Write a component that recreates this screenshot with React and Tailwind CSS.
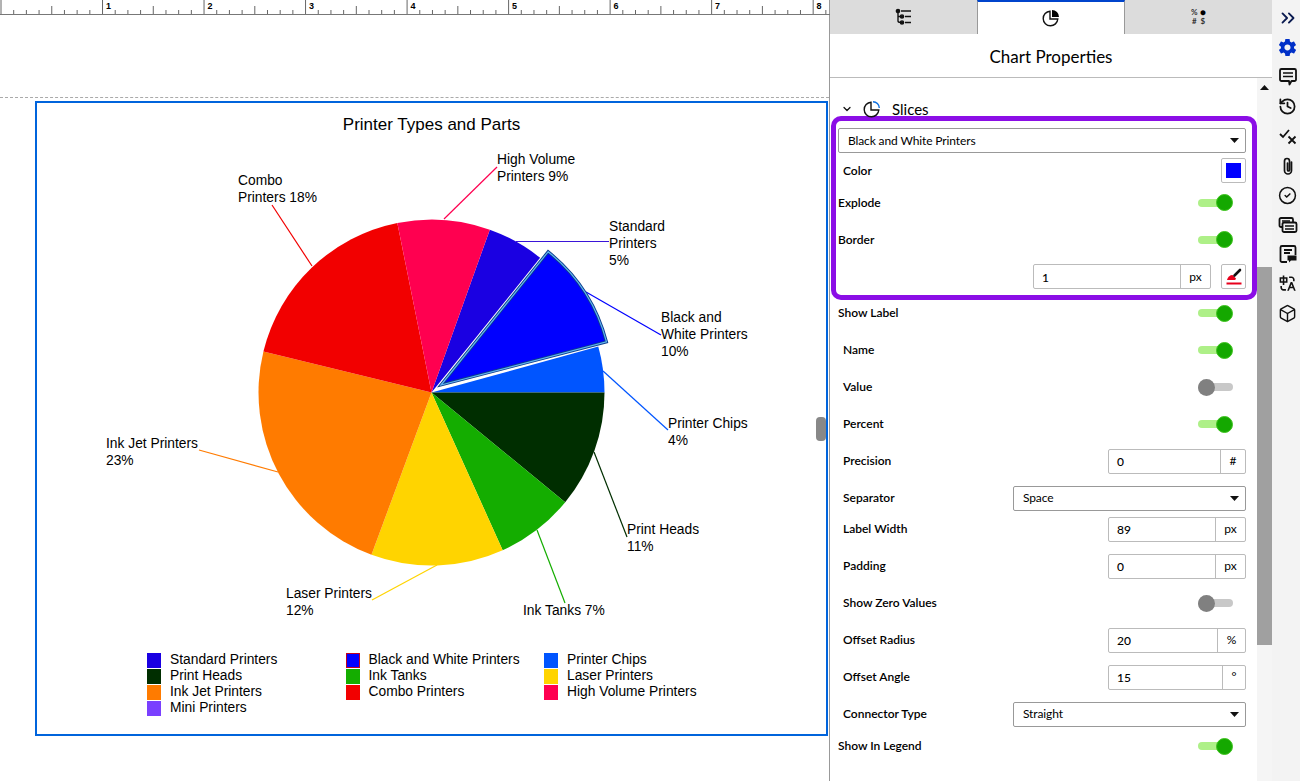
import { ChevronDown, ChevronsRight, History, CircleCheck, Box } from 'lucide-react'
import { IoMdSettings } from 'react-icons/io'
import { RiTranslate } from 'react-icons/ri'

const CX = 431.5
const CY = 392.5
const R = 173

const polar = (cx, cy, r, deg) => {
  const a = (deg * Math.PI) / 180
  return [cx + r * Math.sin(a), cy - r * Math.cos(a)]
}

const wedge = (cx, cy, r, from, to) => {
  const [x1, y1] = polar(cx, cy, r, from)
  const [x2, y2] = polar(cx, cy, r, to)
  const large = to - from > 180 ? 1 : 0
  return `M${cx} ${cy}L${x1} ${y1}A${r} ${r} 0 ${large} 1 ${x2} ${y2}Z`
}

const slices = [
  { from: 19.7, to: 38.9, color: '#1a00e2' },
  { from: 74.6, to: 90, color: '#0055ff' },
  { from: 90, to: 129.4, color: '#002e00' },
  { from: 129.4, to: 155.7, color: '#14ad00' },
  { from: 155.7, to: 200.3, color: '#ffd400' },
  { from: 200.3, to: 283.7, color: '#ff7b00' },
  { from: 283.7, to: 348.6, color: '#f20000' },
  { from: 348.6, to: 379.7, color: '#ff0050' },
]

const connectors = [
  { p: '444,219 497,167', color: '#ff0050' },
  { p: '516,241.5 609,241.5', color: '#3a14d8' },
  { p: '586,292 661,335', color: '#0000ff' },
  { p: '603,371 668,430', color: '#0055ff' },
  { p: '594,452 627,537', color: '#002e00' },
  { p: '537,530 565,603', color: '#14ad00' },
  { p: '437,565 372,600', color: '#ffd400' },
  { p: '278,472 199,450', color: '#ff7b00' },
  { p: '312,266 272,205', color: '#f20000' },
]

const labels = [
  { x: 238, y: 185, lines: ['Combo', 'Printers 18%'] },
  { x: 497, y: 164, lines: ['High Volume', 'Printers 9%'] },
  { x: 609, y: 231, lines: ['Standard', 'Printers', '5%'] },
  { x: 661, y: 322, lines: ['Black and', 'White Printers', '10%'] },
  { x: 668, y: 428, lines: ['Printer Chips', '4%'] },
  { x: 627, y: 534, lines: ['Print Heads', '11%'] },
  { x: 523, y: 615, lines: ['Ink Tanks 7%'] },
  { x: 286, y: 598, lines: ['Laser Printers', '12%'] },
  { x: 106, y: 448, lines: ['Ink Jet Printers', '23%'] },
]

const legend = [
  { name: 'Standard Printers', color: 'bg-[#1a00e2]' },
  { name: 'Black and White Printers', color: 'bg-[#0000ff] border border-[#c00020]' },
  { name: 'Printer Chips', color: 'bg-[#0055ff]' },
  { name: 'Print Heads', color: 'bg-[#002e00]' },
  { name: 'Ink Tanks', color: 'bg-[#14ad00]' },
  { name: 'Laser Printers', color: 'bg-[#ffd400]' },
  { name: 'Ink Jet Printers', color: 'bg-[#ff7b00]' },
  { name: 'Combo Printers', color: 'bg-[#f20000]' },
  { name: 'High Volume Printers', color: 'bg-[#ff0050]' },
  { name: 'Mini Printers', color: 'bg-[#7a40ff]' },
]

const Ruler = () => {
  const ticks = []
  for (let i = 0; i <= 65; i++) {
    const x = 1 + i * 12.69
    const top = i % 8 === 0 ? 0 : i % 4 === 0 ? 6 : 10
    ticks.push(<line key={i} x1={x} x2={x} y1={top} y2={14} stroke="#666" strokeWidth="1" />)
  }
  return (
    <svg width="830" height="15" className="block shrink-0">
      {ticks}
      <line x1="0" x2="830" y1="14.5" y2="14.5" stroke="#777" strokeWidth="1" />
      {[1, 2, 3, 4, 5, 6, 7, 8].map((n) => (
        <text key={n} x={4.5 + n * 101.5} y="9" className="text-[9px] font-bold font-['Liberation_Sans',sans-serif]">{n}</text>
      ))}
    </svg>
  )
}

const PieChart = () => (
  <svg width="789" height="546" viewBox="37 103 789 546" className="block">
    <text x="431.5" y="130" textAnchor="middle" className="text-[17px] font-['Liberation_Sans',sans-serif]">Printer Types and Parts</text>
    {connectors.map((c) => (
      <polyline key={c.p} points={c.p} fill="none" stroke={c.color} strokeWidth="1.2" />
    ))}
    {slices.map((s) => (
      <path key={s.from} d={wedge(CX, CY, R, s.from, s.to)} fill={s.color} />
    ))}
    <path d={wedge(441, 385, 171, 38.8, 75.4)} fill="#0000ff" stroke="#0b3c8c" strokeWidth="3" strokeLinejoin="miter" />
    <path d={wedge(441, 385, 171, 38.8, 75.4)} fill="none" stroke="#62b4f0" strokeWidth="1.2" />
    {labels.map((l) => (
      <text key={l.x} x={l.x} y={l.y} className="text-[13.8px] font-['Liberation_Sans',sans-serif]">
        {l.lines.map((t, i) => (
          <tspan key={t} x={l.x} dy={i === 0 ? 0 : 17}>{t}</tspan>
        ))}
      </text>
    ))}
  </svg>
)

const Toggle = ({ on = true }) => (
  <div className="relative w-[35px] h-[17px] mr-[13px] shrink-0">
    <div className={`absolute top-[4.5px] left-0 h-[8px] rounded-full ${on ? 'w-[30px] bg-[#aef088]' : 'w-[35px] bg-[#c8c8c8]'}`} />
    <div className={`absolute top-0 w-[17px] h-[17px] rounded-full ${on ? 'right-0 bg-[#14a800] border border-[#3fc41f]' : 'left-0 bg-[#808080]'}`} />
  </div>
)

const Caret = () => (
  <svg width="9" height="5" viewBox="0 0 9 5" className="shrink-0"><polygon points="0,0 9,0 4.5,5" fill="#111" /></svg>
)

const SelectBox = ({ value, width }) => (
  <div className={`h-[25px] flex items-center justify-between pl-[9px] pr-[6px] border border-[#999] rounded-[2px] bg-white text-[12px] tracking-[-0.12px] ${width}`}>
    <span>{value}</span>
    <Caret />
  </div>
)

const NumberBox = ({ value, unit, width, unitWidth }) => (
  <div className={`h-[25px] flex border border-[#bbb] rounded-[2px] bg-white text-[12px] ${width}`}>
    <span className="flex-1 flex items-center pl-[8px] pt-[2px] font-medium">{value}</span>
    <span className={`flex items-center justify-center border-l border-[#bbb] ${unitWidth}`}>{unit}</span>
  </div>
)

const Row = ({ label, indent = true, className = '', children }) => (
  <div className={`h-[25px] flex items-center justify-between ${className}`}>
    <span className={`text-[12px] font-semibold ${indent ? 'ml-[5px]' : ''}`}>{label}</span>
    {children}
  </div>
)

const TabOneIcon = () => (
  <svg width="18" height="18" viewBox="0 0 18 18" fill="none" stroke="#111" strokeWidth="1.4">
    <path d="M3 2v11" />
    <circle cx="3" cy="3" r="1.6" fill="#111" />
    <circle cx="7" cy="8.5" r="1.6" fill="#111" />
    <circle cx="7" cy="14.5" r="1.6" fill="#111" />
    <path d="M3 8.5h3M3 13c0 1 1 1.5 3 1.5M6 3h10M10 8.5h6M10 14.5h6" />
  </svg>
)

const PieTabIcon = ({ accent = '#000', fillIt = true }) => (
  <svg width="18" height="18" viewBox="0 0 18 18" fill="none" stroke="#111" strokeWidth="1.4">
    <path d="M8 2.2a7.3 7.3 0 1 0 7.8 7.8H8z" />
    {fillIt
      ? <path d="M10 1a7 7 0 0 1 7 7h-7z" fill={accent} stroke="none" />
      : <path d="M10 1.7a6.5 6.5 0 0 1 6.3 6.3" stroke={accent} />}
  </svg>
)

const SymbolIcon = () => (
  <div className="grid grid-cols-2 gap-x-[2px] text-[8px] leading-[9px] font-bold text-[#333] text-center">
    <span>%</span><span className="text-[10px] leading-[9px] text-black">●</span>
    <span>#</span><span>$</span>
  </div>
)

const BrushIcon = () => (
  <svg width="18" height="18" viewBox="0 0 18 18">
    <path d="M2 12c.5-3 3-5 5.500-5l3.500 3.500c-.3 1-.9 1.500-2 1.500z" fill="#e8001c" />
    <path d="M9.500 7.500L15 2" stroke="#111" strokeWidth="2.6" strokeLinecap="round" />
    <rect x="1.500" y="14.500" width="15" height="2" fill="#e8001c" />
  </svg>
)

const ChatIcon = () => (
  <svg width="20" height="20" viewBox="0 0 20 20" fill="none" stroke="#111" strokeWidth="1.8" strokeLinejoin="round">
    <path d="M3.500 2h13A1.500 1.500 0 0 1 18 3.500v9a1.500 1.500 0 0 1-1.500 1.500h-3l-2 3.500L11 14H3.500A1.500 1.500 0 0 1 2 12.500v-9A1.500 1.500 0 0 1 3.500 2z" />
    <path d="M5 6h10M5 9.500h10" strokeWidth="1.5" />
  </svg>
)

const CheckCross = () => (
  <svg width="20" height="20" viewBox="0 0 20 20" fill="none" stroke="#111" strokeWidth="1.8">
    <path d="M2 8l3 3 6-7M10.500 10.500l7 7M17.500 10.500l-7 7" />
  </svg>
)

const ClipIcon = () => (
  <svg width="20" height="20" viewBox="0 0 20 20" fill="none" stroke="#111" strokeWidth="1.7" strokeLinecap="round">
    <path d="M13.500 6v8.500a3.500 3.500 0 0 1-7 0V5a2.500 2.500 0 0 1 5 0v9a1 1 0 0 1-2 0V7" />
  </svg>
)

const StackIcon = () => (
  <svg width="20" height="20" viewBox="0 0 20 20" fill="none" stroke="#111" strokeWidth="1.8">
    <rect x="1.500" y="3" width="13.500" height="9" rx="1.500" />
    <rect x="4.500" y="7.500" width="14" height="9.500" rx="1.500" fill="#f3f3f3" />
    <path d="M7 11h9M7 14h9M4 6h8" strokeWidth="1.5" />
  </svg>
)

const NoteIcon = () => (
  <svg width="20" height="20" viewBox="0 0 20 20" fill="none" stroke="#111" strokeWidth="1.8">
    <path d="M9 18H4a1.500 1.500 0 0 1-1.500-1.500v-13A1.500 1.500 0 0 1 4 2h12a1.500 1.500 0 0 1 1.500 1.500V11" />
    <path d="M6 6h8M6 9h6" />
    <path d="M9.500 11.500h9v5h-5.500l-2 2v-2H9.500z" fill="#111" stroke="none" />
  </svg>
)

const railIcons = [
  <ChevronsRight key="a" size={22} color="#0a1a50" strokeWidth={2} />,
  <IoMdSettings key="b" size={21} color="#0030c8" />,
  <ChatIcon key="c" />,
  <History key="d" size={19} color="#111" strokeWidth={2.2} />,
  <CheckCross key="e" />,
  <ClipIcon key="f" />,
  <CircleCheck key="g" size={19} color="#111" strokeWidth={1.9} />,
  <StackIcon key="h" />,
  <NoteIcon key="i" />,
  <RiTranslate key="j" size={19} color="#111" />,
  <Box key="k" size={19} color="#111" strokeWidth={1.8} />,
]

export default function App() {
  return (
    <div className="flex w-[1300px] h-[781px] overflow-hidden bg-white text-black font-['Lato',sans-serif]">
      {/* canvas */}
      <div className="relative w-[830px] shrink-0 border-r border-[#999]">
        <Ruler />
        <div className="mt-[82px] border-t border-dashed border-[#aaa]" />
        <div className="ml-[35px] mt-[3px] w-[793px] h-[635px] border-2 border-[#0064dc] font-['Liberation_Sans',sans-serif]">
          <PieChart />
          <div className="grid grid-cols-[198.5px_198.5px_198.5px] pl-[110px] mt-[3px]">
            {legend.map((item) => (
              <div key={item.name} className="h-[16px] flex items-center gap-[9px] text-[13.8px]">
                <span className={`w-[14px] h-[15px] shrink-0 ${item.color}`} />
                <span className="whitespace-nowrap">{item.name}</span>
              </div>
            ))}
          </div>
        </div>
        <div className="absolute left-[816px] top-[417px] w-[10px] h-[24px] rounded-[4px] bg-[#888]" />
      </div>

      {/* properties panel */}
      <div className="w-[442px] shrink-0 flex flex-col">
        <div className="h-[34px] flex shrink-0">
          <div className="w-[147px] bg-[#dcdcdc] flex items-center justify-center"><TabOneIcon /></div>
          <div className="w-[148px] bg-white border-t-2 border-t-[#0044cc] border-x border-x-[#999] flex items-center justify-center"><PieTabIcon /></div>
          <div className="flex-1 bg-[#dcdcdc] flex items-center justify-center"><SymbolIcon /></div>
        </div>
        <div className="h-[44px] shrink-0 flex items-center justify-center pt-[2px] border-b border-[#bbb] text-[17px]">Chart Properties</div>
        <div className="flex-1 flex min-h-0">
          <div className="w-[427px] shrink-0">
            <div className="h-[38px] flex items-center pl-[11px] pt-[24px] text-[15px]">
              <ChevronDown size={12} color="#111" strokeWidth={2.5} />
              <span className="ml-[10px]"><PieTabIcon accent="#0b6fe0" fillIt={false} /></span>
              <span className="ml-[11px]">Slices</span>
            </div>
            <div className="ml-[1px] w-[426px] h-[184px] border-[5px] border-[#8b0ee6] rounded-[10px] pl-[2px] pr-[6px] pt-[7px]">
              <SelectBox value="Black and White Printers" width="w-full" />
              <Row label="Color" className="mt-[5px]">
                <div className="w-[25px] h-[25px] border border-[#bbb] rounded-[2px] flex items-center justify-center">
                  <span className="w-[15px] h-[15px] bg-[#0000ff]" />
                </div>
              </Row>
              <Row label="Explode" indent={false} className="mt-[7px]"><Toggle /></Row>
              <Row label="Border" indent={false} className="mt-[12px]"><Toggle /></Row>
              <div className="h-[25px] mt-[12px] flex justify-end gap-[10px]">
                <NumberBox value="1" unit="px" width="w-[178px]" unitWidth="w-[30px]" />
                <div className="w-[25px] h-[25px] border border-[#bbb] rounded-[2px] flex items-center justify-center"><BrushIcon /></div>
              </div>
            </div>
            <div className="pl-[8px] pr-[11px] flex flex-col gap-[12px] mt-[0.5px]">
              <Row label="Show Label" indent={false}><Toggle /></Row>
              <Row label="Name"><Toggle /></Row>
              <Row label="Value"><Toggle on={false} /></Row>
              <Row label="Percent"><Toggle /></Row>
              <Row label="Precision"><NumberBox value="0" unit="#" width="w-[138px]" unitWidth="w-[25px]" /></Row>
              <Row label="Separator"><SelectBox value="Space" width="w-[233px]" /></Row>
              <Row label="Label Width" className="-mt-[6px]"><NumberBox value="89" unit="px" width="w-[138px]" unitWidth="w-[30px]" /></Row>
              <Row label="Padding"><NumberBox value="0" unit="px" width="w-[138px]" unitWidth="w-[30px]" /></Row>
              <Row label="Show Zero Values"><Toggle on={false} /></Row>
              <Row label="Offset Radius"><NumberBox value="20" unit="%" width="w-[138px]" unitWidth="w-[28px]" /></Row>
              <Row label="Offset Angle"><NumberBox value="15" unit="°" width="w-[138px]" unitWidth="w-[23px]" /></Row>
              <Row label="Connector Type"><SelectBox value="Straight" width="w-[233px]" /></Row>
              <Row label="Show In Legend" indent={false} className="-mt-[5px]"><Toggle /></Row>
            </div>
          </div>
          {/* scrollbar */}
          <div className="w-[15px] shrink-0 bg-[#f5f5f5] flex flex-col items-center">
            <svg width="9" height="5" viewBox="0 0 9 5" className="mt-[7px] shrink-0"><polygon points="0,5 9,5 4.5,0" fill="#111" /></svg>
            <div className="w-full h-[378px] mt-[177px] bg-[#a0a0a0]" />
          </div>
        </div>
      </div>

      {/* right rail */}
      <div className="flex-1 bg-[#f3f3f3] flex flex-col items-center gap-[9.5px] pt-[8px] pl-[3px]">
        {railIcons.map((icon) => (
          <div key={icon.key} className="h-[20px] flex items-center justify-center">{icon}</div>
        ))}
      </div>
    </div>
  )
}
